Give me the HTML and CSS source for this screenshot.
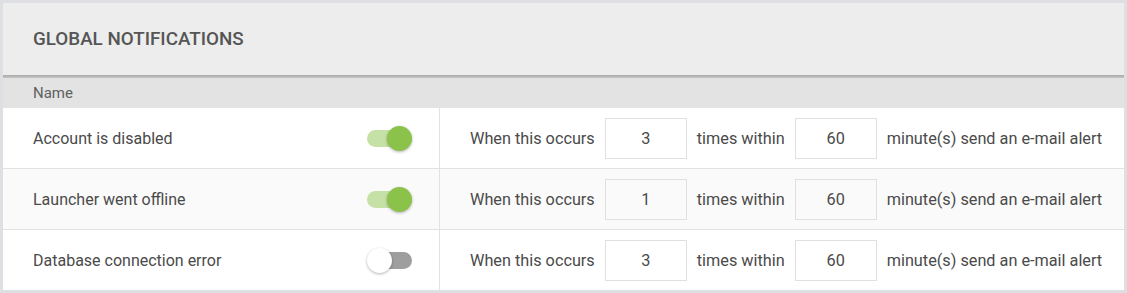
FILE: index.html
```html
<!DOCTYPE html>
<html>
<head>
<meta charset="utf-8">
<link rel="stylesheet" href="styles.css">
</head>
<body>
<div class="panel">
  <div class="header"><h1 class="title">GLOBAL NOTIFICATIONS</h1></div>
  <div class="header-rule"></div>
  <div class="colhead">Name</div>
  <div class="rows">
    <div class="row">
      <div class="name-cell">
        <span class="label">Account is disabled</span>
        <span class="switch on"><span class="track"></span><span class="thumb"></span></span>
      </div>
      <div class="rule-cell">
        <span>When this occurs</span>
        <span class="box">3</span>
        <span>times within</span>
        <span class="box">60</span>
        <span>minute(s) send an e-mail alert</span>
      </div>
    </div>
    <div class="row alt">
      <div class="name-cell">
        <span class="label">Launcher went offline</span>
        <span class="switch on"><span class="track"></span><span class="thumb"></span></span>
      </div>
      <div class="rule-cell">
        <span>When this occurs</span>
        <span class="box">1</span>
        <span>times within</span>
        <span class="box">60</span>
        <span>minute(s) send an e-mail alert</span>
      </div>
    </div>
    <div class="row">
      <div class="name-cell">
        <span class="label">Database connection error</span>
        <span class="switch off"><span class="track"></span><span class="thumb"></span></span>
      </div>
      <div class="rule-cell">
        <span>When this occurs</span>
        <span class="box">3</span>
        <span>times within</span>
        <span class="box">60</span>
        <span>minute(s) send an e-mail alert</span>
      </div>
    </div>
  </div>
</div>
</body>
</html>
```
FILE: styles.css
```css
* { box-sizing: border-box; }
html, body { margin: 0; height: 100%; }
body {
  background: #dedfe2;
  padding: 3px;
  font-family: Roboto, "Liberation Sans", sans-serif;
  color: #4a4a4a;
}
.panel {
  background: #fff;
  height: 287px;
  display: flex;
  flex-direction: column;
}
.header {
  background: #ededed;
  height: 73px;
  display: flex;
  align-items: center;
  padding-left: 30px;
}
.title {
  margin: 0;
  font-size: 18.8px;
  font-weight: 500;
  color: #555;
  letter-spacing: 0;
}
.header-rule {
  height: 3px;
  background: linear-gradient(#a9a9a9, #c6c6c6);
}
.colhead {
  background: #e3e3e3;
  height: 30px;
  display: flex;
  align-items: center;
  padding-left: 30px;
  font-size: 15px;
  color: #606060;
}
.rows { display: flex; flex-direction: column; }
.row {
  display: grid;
  grid-template-columns: 437px 1fr;
  height: 61px;
  border-bottom: 1px solid #e2e2e2;
  background: #fff;
}
.row:last-child { border-bottom: 0; height: 60px; }
.row.alt { background: #fafafa; }
.name-cell {
  display: flex;
  align-items: center;
  justify-content: space-between;
  padding: 0 27px 0 30px;
  border-right: 1px solid #e2e2e2;
  font-size: 16px;
}
.rule-cell {
  display: flex;
  align-items: center;
  gap: 10px;
  padding-left: 30px;
  font-size: 16.25px;
}
.box {
  width: 82px;
  height: 41px;
  border: 1px solid #e0e0e0;
  display: flex;
  align-items: center;
  justify-content: center;
  color: #4a4a4a;
}
.switch {
  position: relative;
  width: 45px;
  height: 25px;
  display: inline-block;
}
.track {
  position: absolute;
  left: 0;
  right: 0;
  top: 4px;
  height: 17px;
  border-radius: 9px;
}
.thumb {
  position: absolute;
  top: 0;
  width: 25px;
  height: 25px;
  border-radius: 50%;
  box-shadow: 0 1px 3px rgba(0,0,0,0.3);
}
.switch.on .track { background: #c5e1a5; }
.switch.on .thumb { right: 0; background: #8bc34a; }
.switch.off .track { background: #9e9e9e; left: 2px; }
.switch.off .thumb { left: 0; background: #fff; }
```
